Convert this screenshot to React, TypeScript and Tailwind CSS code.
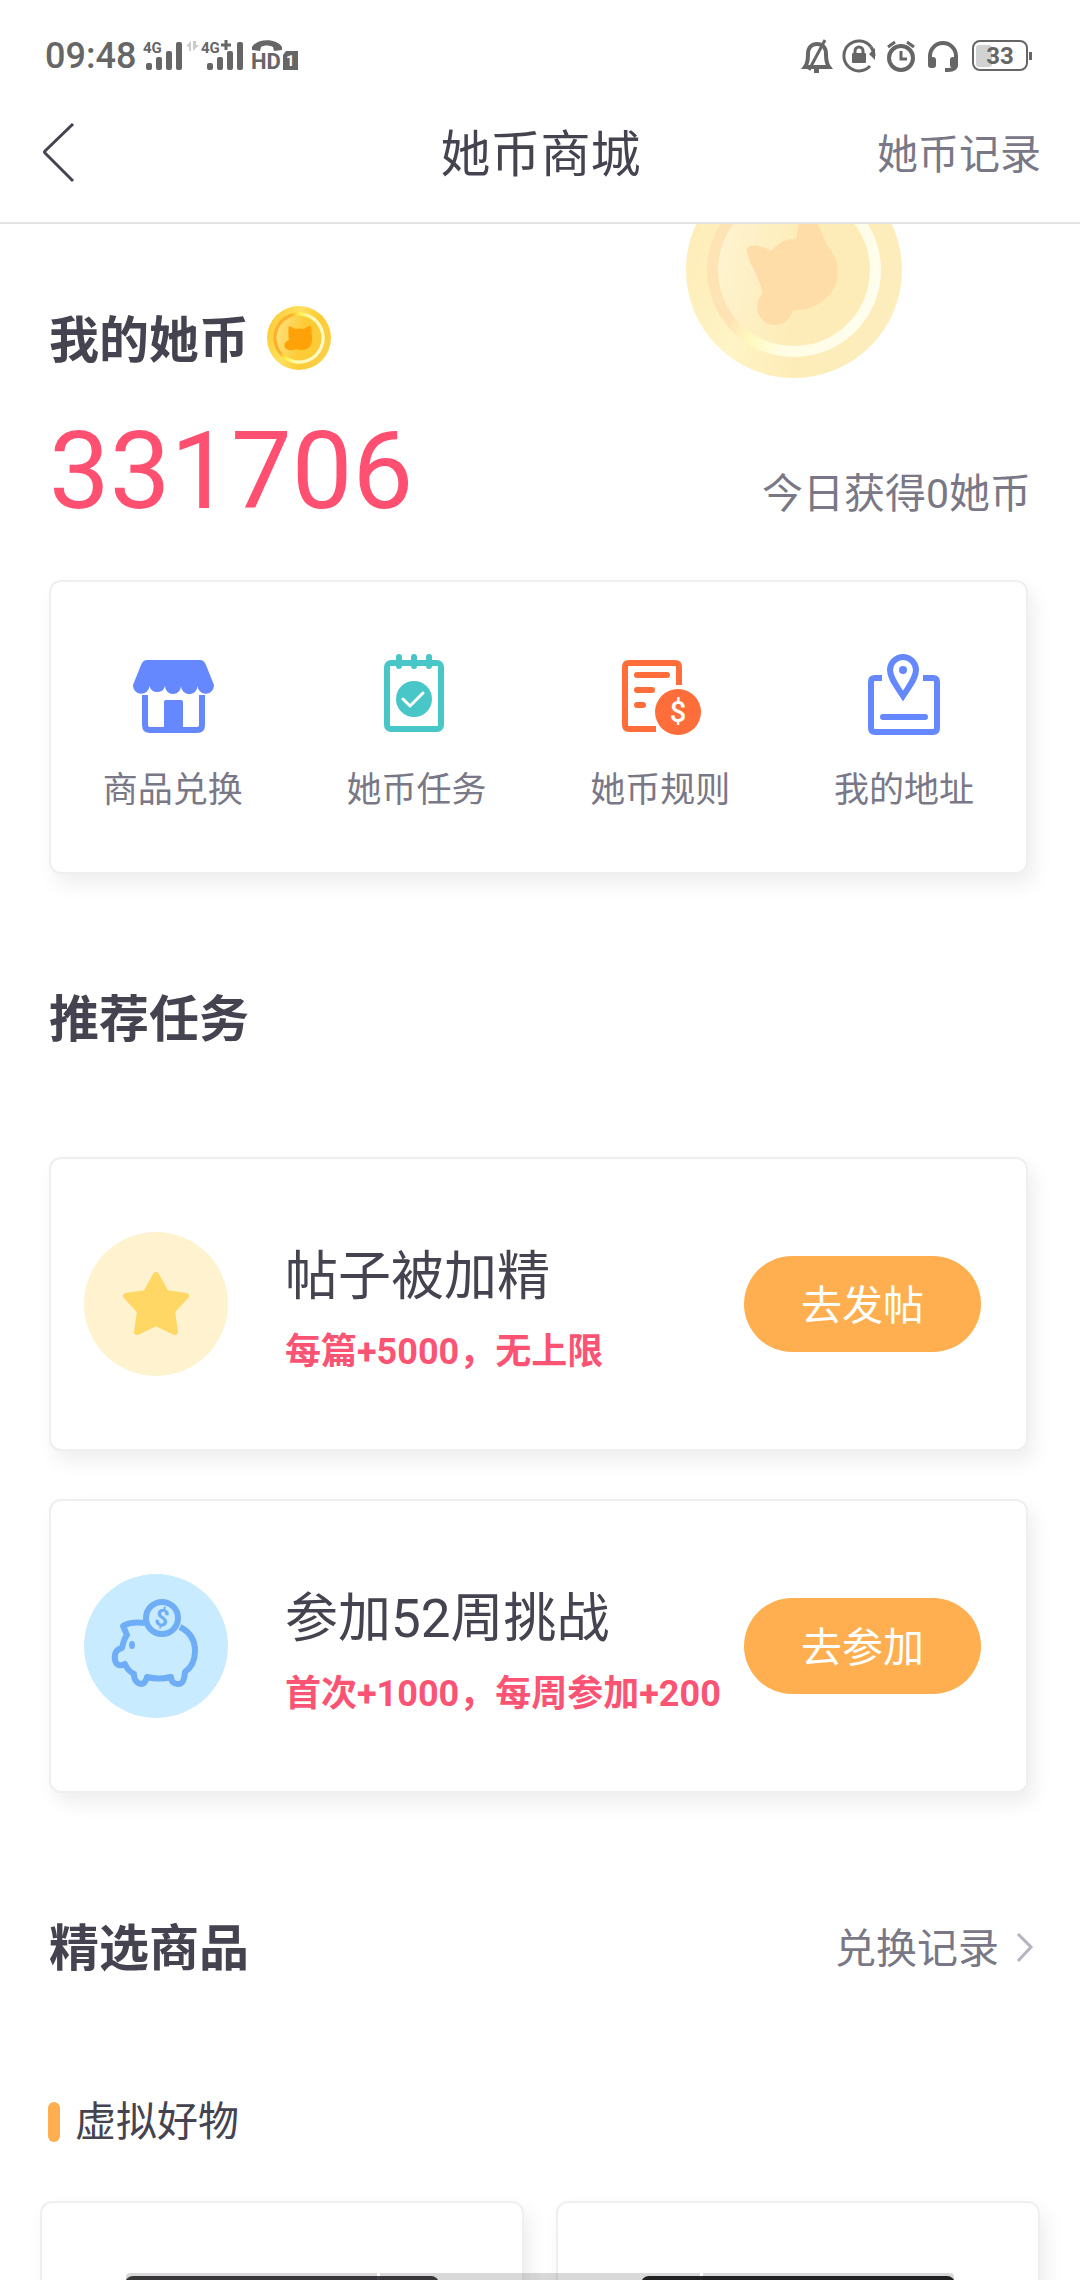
import React from 'react';

interface CoinProps {
  id: string;
  className: string;
  children: React.ReactNode;
}

interface TaskProps {
  icon: React.ReactNode;
  title: string;
  reward: string;
  action: string;
}

const cardClass = 'rounded-xl border-2 border-[#efefef] bg-white shadow-[6px_10px_20px_rgba(0,0,0,0.07)]';

const SignalBars = () => (
  <g fill="#666">
    <rect x="4" y="24" width="6" height="7" rx="2" />
    <rect x="14" y="18" width="6" height="13" rx="2" />
    <rect x="24" y="12" width="6" height="19" rx="2" />
    <rect x="34" y="3" width="6" height="28" rx="2" />
  </g>
);

const StatusBar = () => (
  <div className="flex h-[76px] items-center justify-between pt-9 pr-12 pl-[45px] text-[#666]">
    <div className="flex items-center">
      <span className="text-[36px] leading-10 font-medium">09:48</span>
      <svg className="ml-[6px] h-[34px] w-[42px]" viewBox="0 0 42 34">
        <SignalBars />
        <text x="1" y="14" fontSize="15" fontWeight="700" fill="#666">4G</text>
      </svg>
      <svg className="h-[34px] w-[62px]" viewBox="0 0 62 34">
        <path d="M2 7l5-5v10H5V8zM9 2v10l6-6h-3V2z" fill="#ccc" />
        <g transform="translate(19 0)">
          <SignalBars />
        </g>
        <text x="17" y="14" fontSize="15" fontWeight="700" fill="#666">4G</text>
        <path d="M37 6h10M42 1v10" stroke="#666" strokeWidth="3" />
      </svg>
      <svg className="ml-1 h-10 w-[52px]" viewBox="0 -3 52 40">
        <path d="M2 8c5-9 25-9 30 0v3l-8 1-1-4c-4-2-9-2-12 0l-1 4-8-1z" fill="#666" />
        <text x="1" y="30" fontSize="22" fontWeight="700" fill="#666">HD</text>
        <path d="M36 12h12v19H33V16z" fill="#666" />
        <text x="36" y="27" fontSize="15" fontWeight="700" fill="#fff">1</text>
      </svg>
    </div>
    <div className="flex items-center gap-2">
      <svg className="size-[34px]" viewBox="0 0 34 34" fill="none" stroke="#666" strokeWidth="4">
        <path d="M5 28c3-4 3-8 3-13 0-7 4-10 9-10s9 3 9 10c0 5 0 9 3 13z" />
        <path d="M25 1L9 31" strokeWidth="3" />
        <path d="M14 32h5" />
      </svg>
      <svg className="size-[34px]" viewBox="0 0 34 34" fill="none" stroke="#666" strokeWidth="3">
        <path d="M29 8A15 15 0 1 0 28 27" />
        <path d="M27 15h6V9M27 15l6 6v-6z" fill="#666" stroke="none" />
        <path d="M29 8q3 4 3 9" />
        <path d="M13 15v-3a4 4 0 0 1 8 0v3" />
        <rect x="10" y="14" width="14" height="10" rx="1" fill="#666" stroke="none" />
      </svg>
      <svg className="size-[34px]" viewBox="0 0 34 34" fill="none" stroke="#666" strokeWidth="4">
        <circle cx="17" cy="19" r="12" />
        <path d="M17 12v8h6" strokeWidth="3" />
        <path d="M4 8l7-5M30 8l-7-5" strokeWidth="3" />
      </svg>
      <svg className="size-[34px]" viewBox="0 0 34 34" fill="none" stroke="#666" strokeWidth="4">
        <path d="M4 21v-4a13 13 0 0 1 26 0v8c0 5-4 6-8 6h-3" />
        <rect x="2" y="18" width="8" height="11" rx="3" fill="#666" stroke="none" />
        <rect x="24" y="18" width="8" height="11" rx="3" fill="#666" stroke="none" />
      </svg>
      <svg className="ml-1 h-[34px] w-[60px]" viewBox="0 0 60 34">
        <rect x="4" y="6" width="16" height="22" rx="3" fill="#d2d2d2" />
        <rect x="1" y="2" width="54" height="29" rx="7" fill="none" stroke="#666" strokeWidth="2" />
        <rect x="57" y="13" width="3" height="8" fill="#666" />
        <text x="28" y="25" fontSize="24" fontWeight="700" textAnchor="middle" fill="#666">33</text>
      </svg>
    </div>
  </div>
);

const Coin: React.FC<CoinProps> = ({ id, className, children }) => (
  <svg className={className} viewBox="-108 -108 216 216">
    <defs>
      <linearGradient id={`${id}-rim`} x1="0" y1="0.300" x2="1" y2="0.700">
        <stop offset="0" stopColor="#fdcb34" />
        <stop offset="0.380" stopColor="#fee15f" />
        <stop offset="0.650" stopColor="#fccb35" />
        <stop offset="1" stopColor="#fccf48" />
      </linearGradient>
      <linearGradient id={`${id}-ring`} x1="0" y1="0.350" x2="1" y2="0.650">
        <stop offset="0.240" stopColor="#fdb02c" />
        <stop offset="0.380" stopColor="#fff24a" />
        <stop offset="0.560" stopColor="#fffab0" />
        <stop offset="1" stopColor="#fffbd0" />
      </linearGradient>
      <linearGradient id={`${id}-face`} x1="0" y1="0.400" x2="1" y2="0.600">
        <stop offset="0" stopColor="#fedf78" />
        <stop offset="0.550" stopColor="#fccb35" />
      </linearGradient>
    </defs>
    <circle r="108" fill={`url(#${id}-rim)`} />
    <circle r="87" fill={`url(#${id}-ring)`} />
    <circle r="76" fill={`url(#${id}-face)`} />
    <g fill="#ffa109">{children}</g>
  </svg>
);

const ShopIcon = () => (
  <svg className="size-24" viewBox="0 0 96 96">
    <path
      d="M22 14h53q4 0 6 5l8 20a8 8 0 0 1-16.500 1a8 8 0 0 1-16.500 0a8 8 0 0 1-16 0a8 8 0 0 1-15.500 0A8 8 0 0 1 8 39l8-20q2-5 6-5z"
      fill="#6688ff"
    />
    <path d="M20 49v30q0 5 5 5h47q5 0 5-5V49" fill="none" stroke="#6688ff" strokeWidth="6" />
    <rect x="39" y="54" width="19" height="31" rx="2" fill="#6688ff" />
  </svg>
);

const NotepadIcon = () => (
  <svg className="size-24" viewBox="-1 0 96 96" fill="none" strokeLinecap="round" strokeLinejoin="round">
    <rect x="17" y="17" width="54" height="66" rx="4" stroke="#48c6c8" strokeWidth="6" />
    <path d="M29 11v9M44 11v9M59 11v9" stroke="#48c6c8" strokeWidth="6" />
    <circle cx="44" cy="53" r="18" fill="#48c6c8" />
    <path d="M33 53l7 7 13-13" stroke="#fff" strokeWidth="3" />
  </svg>
);

const RulesIcon = () => (
  <svg className="size-24" viewBox="-1 0 96 96" fill="none" stroke="#ff6e3a" strokeWidth="6">
    <path d="M66 39V21q0-4-4-4H16q-4 0-4 4v58q0 4 4 4h27" />
    <path d="M24 29h30M24 44h15M24 59h6" strokeLinecap="round" />
    <circle cx="65" cy="66" r="26" fill="#fff" stroke="none" />
    <circle cx="65" cy="66" r="23" fill="#ff6e3a" stroke="none" />
    <text x="65" y="76" fontSize="29" fontWeight="500" textAnchor="middle" fill="#fff" stroke="none">$</text>
  </svg>
);

const AddressIcon = () => (
  <svg className="size-24" viewBox="-1 0 96 96" fill="none" stroke="#6688ff" strokeWidth="6">
    <path d="M25 32h-7q-4 0-4 4v46q0 4 4 4h58q4 0 4-4V36q0-4-4-4h-10" />
    <path d="M46 50C39 39 33 32 33 24a13 13 0 0 1 26 0C59 32 53 39 46 50z" />
    <circle cx="46" cy="24" r="4" fill="#6688ff" stroke="none" />
    <path d="M26 71h42" strokeLinecap="round" />
  </svg>
);

const StarIcon = () => (
  <svg className="size-36 shrink-0" viewBox="0 0 144 144">
    <circle cx="72" cy="72" r="72" fill="#fff2cf" />
    <path
      d="M72 43l10 18 20 3-14 15 3 21-19-9-19 9 3-21-14-15 20-3z"
      fill="#ffd764"
      stroke="#ffd764"
      strokeWidth="6"
      strokeLinejoin="round"
    />
  </svg>
);

const PiggyIcon = () => (
  <svg className="size-36 shrink-0" viewBox="0 0 144 144" fill="none" stroke="#6faef6" strokeWidth="6" strokeLinejoin="round">
    <circle cx="72" cy="72" r="72" fill="#c8ebff" stroke="none" />
    <path d="M62 49C54 48 45 48 39 52L43 61C40 65 39 69 38 74C32 75 30 80 31 86C32 92 37 92 41 90C43 95 46 98 50 100C50 106 53 110 58 110C61 109 62 107 63 103C71 105 79 105 87 103C87 108 90 110 94 110C98 110 100 108 101 98C108 93 111 85 111 77C111 67 106 58 96 53" />
    <circle cx="78" cy="44" r="16" />
    <ellipse cx="48" cy="71" rx="3" ry="4" fill="#6faef6" stroke="none" />
    <text x="78" y="52" fontSize="24" fontWeight="700" textAnchor="middle" fill="#6faef6" stroke="none" transform="rotate(12 78 44)">
      $
    </text>
  </svg>
);

const entries = [
  { label: '商品兑换', icon: <ShopIcon /> },
  { label: '她币任务', icon: <NotepadIcon /> },
  { label: '她币规则', icon: <RulesIcon /> },
  { label: '我的地址', icon: <AddressIcon /> },
];

const tasks: TaskProps[] = [
  { icon: <StarIcon />, title: '帖子被加精', reward: '每篇+5000，无上限', action: '去发帖' },
  { icon: <PiggyIcon />, title: '参加52周挑战', reward: '首次+1000，每周参加+200', action: '去参加' },
];

const TaskCard: React.FC<TaskProps> = ({ icon, title, reward, action }) => (
  <li className={`${cardClass} flex h-[294px] items-center pr-[45px] pl-[33px]`}>
    {icon}
    <div className="ml-[57px] flex-1 pt-4 whitespace-nowrap">
      <h3 className="text-[53px] leading-[80px]">{title}</h3>
      <p className="text-[36px] leading-[70px] font-bold text-[#fb5373]">{reward}</p>
    </div>
    <button type="button" className="h-24 w-[237px] shrink-0 rounded-full bg-[#ffaf4f] pt-[6px] text-[41px] text-white">
      {action}
    </button>
  </li>
);

const App = () => (
  <div className="relative flex h-screen flex-col overflow-hidden bg-white font-['Roboto','Noto_Sans_CJK_SC',sans-serif] text-[#454350]">
    <StatusBar />
    <header className="grid h-[148px] shrink-0 grid-cols-3 items-center border-b-2 border-[#e2e2e2] pt-3 pr-[39px] pl-10">
      <button type="button" aria-label="返回" className="justify-self-start">
        <svg className="h-16 w-9" viewBox="0 4 36 64" fill="none" stroke="#454350" strokeWidth="3">
          <path d="M33 5L5 32q-1 1 0 2l28 28" />
        </svg>
      </button>
      <h1 className="text-center text-[50px] leading-[64px]">她币商城</h1>
      <a href="#records" className="justify-self-end text-[41px] leading-[56px] text-[#7a7786]">她币记录</a>
    </header>

    <main className="relative flex flex-1 flex-col overflow-hidden">
      {/* faded coin hanging from the header */}
      <div className="absolute -top-[62px] right-[178px] opacity-35">
        <Coin id="big" className="size-[216px]">
          <path d="M-47-18C-49-25-38-28-23-19C-17-26-9-31 0-31Q3-31 3-36C4-45 6-55 10-56C20-58 25-44 33-24C40-17 44-8 44 2C44 23 24 41 0 40L-24 42L-32 22C-34 7-44-3-47-18Z" />
          <circle cx="-19" cy="37" r="18" />
        </Coin>
      </div>

      <section className="relative px-[49px] pt-[82px]">
        <div className="flex items-start gap-[18px]">
          <h2 className="text-[50px] leading-[70px] font-bold">我的她币</h2>
          <Coin id="small" className="size-16">
            <path d="M-35-38C-34-43-22-36-12-30Q2-34 16-30C24-36 38-45 41-40C43-30 42-20 43-10C47 14 42 36 16 40C6 43-4 36-14 39C-24 44-46 42-49 27C-50 18-44 11-34 8C-36-6-36-26-35-38Z" />
          </Coin>
        </div>
        <div className="mt-[41px] flex items-end justify-between">
          <span className="text-[108px] leading-[108px] text-[#ff5072]">331706</span>
          <span className="text-[41px] leading-[62px] text-[#7a7786]">今日获得0她币</span>
        </div>
        <nav className={`${cardClass} mt-[55px] mr-[3px] grid grid-cols-4 pt-16 pb-[57px]`}>
          {entries.map((entry) => (
            <button type="button" key={entry.label} className="flex flex-col items-center gap-[25px]">
              {entry.icon}
              <span className="text-[35px] leading-[48px] text-[#7a7786]">{entry.label}</span>
            </button>
          ))}
        </nav>
      </section>

      <section className="mt-[114px] pr-[52px] pl-[49px]">
        <h2 className="text-[50px] leading-[64px] font-bold">推荐任务</h2>
        <ul className="mt-[105px] flex flex-col gap-12">
          {tasks.map((task) => (
            <TaskCard key={task.title} {...task} />
          ))}
        </ul>
      </section>

      <section className="mt-[124px] flex flex-1 flex-col">
        <div className="flex items-center justify-between pr-[45px] pl-[49px]">
          <h2 className="text-[50px] leading-[64px] font-bold">精选商品</h2>
          <a href="#orders" className="flex items-center gap-4 text-[41px] leading-[56px] text-[#7a7786]">
            兑换记录
            <svg className="h-8 w-5" viewBox="0 4 20 32" fill="none" stroke="#b6b4c0" strokeWidth="3">
              <path d="M3 5l13 13L3 32" />
            </svg>
          </a>
        </div>
        <div className="mt-[113px] flex items-center gap-[15px] pl-12">
          <span className="h-10 w-3 rounded-full bg-[#ffaf4f]" />
          <h3 className="text-[41px] leading-[56px]">虚拟好物</h3>
        </div>
        <div className="mt-[51px] grid flex-1 grid-cols-2 gap-8 px-10">
          <div className={`${cardClass} -mb-10 px-[83px] pt-[73px]`}>
            <div className="h-40 rounded-lg bg-[#434145]" />
          </div>
          <div className={`${cardClass} -mb-10 px-[83px] pt-[73px]`}>
            <div className="h-40 rounded-lg bg-[#272628]" />
          </div>
        </div>
      </section>
    </main>

    {/* gesture hints of the system navigation */}
    <div className="absolute inset-x-[126px] bottom-0 flex h-[7px] gap-[3px]">
      <span className="w-[251px] rounded-tl bg-black/15" />
      <span className="flex-1 bg-black/15" />
      <span className="w-[251px] rounded-tr bg-black/15" />
    </div>
  </div>
);

export default App;
